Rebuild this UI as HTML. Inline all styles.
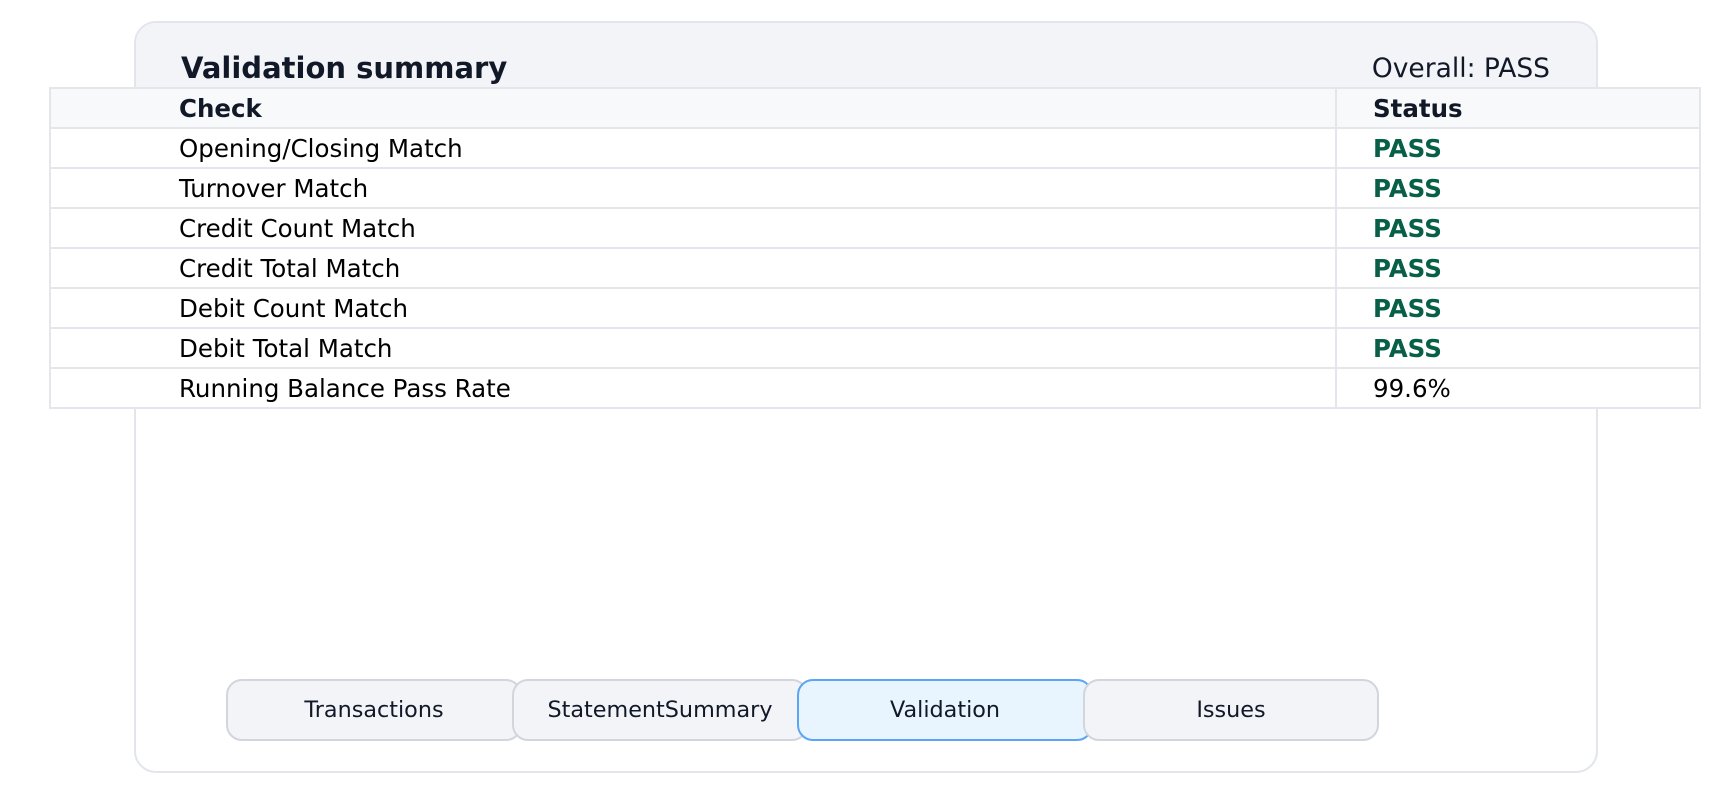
<!DOCTYPE html>
<html><head><style>
*{box-sizing:border-box;margin:0;padding:0}
body{width:1716px;height:795px;background:#fff;font-family:"DejaVu Sans","Liberation Sans",sans-serif;position:relative;overflow:hidden;color:#111827}
.card{position:absolute;left:134px;top:21px;width:1464px;height:752px;border:2px solid #e2e5ec;border-radius:22px;background:#fff;overflow:hidden}
.cardtop{position:absolute;left:0;top:0;right:0;height:70px;background:#f3f4f8}
.title{position:absolute;left:181px;top:51px;font-size:29px;font-weight:bold;color:#111827}
.overall{position:absolute;right:166px;top:53px;font-size:26.5px;color:#111827}
table{position:absolute;left:49px;top:87px;width:1652px;border-collapse:collapse;font-size:24.5px;background:#fff}
td{height:40px;border:2px solid #e4e6eb;padding:0;vertical-align:middle;background:#fff;color:#000}
td.c{padding-left:128px}
td.s{width:364px;padding-left:36px}
tr.h td{background:#f8f9fb;font-weight:bold;color:#111827}
td.p{color:#065f46;font-weight:bold}
.btn{position:absolute;top:679px;width:296px;height:62px;border:2px solid #d2d5dc;border-radius:16px;background:#f3f4f8;font-size:22.3px;text-align:center;line-height:59px;color:#111827}
.btn.a{background:#e8f4fe;border-color:#5aa5f5}
</style></head><body>
<div class="card"><div class="cardtop"></div></div>
<div class="title">Validation summary</div>
<div class="overall">Overall: PASS</div>
<table>
<tr class="h"><td class="c">Check</td><td class="s">Status</td></tr>
<tr><td class="c">Opening/Closing Match</td><td class="s p">PASS</td></tr>
<tr><td class="c">Turnover Match</td><td class="s p">PASS</td></tr>
<tr><td class="c">Credit Count Match</td><td class="s p">PASS</td></tr>
<tr><td class="c">Credit Total Match</td><td class="s p">PASS</td></tr>
<tr><td class="c">Debit Count Match</td><td class="s p">PASS</td></tr>
<tr><td class="c">Debit Total Match</td><td class="s p">PASS</td></tr>
<tr><td class="c">Running Balance Pass Rate</td><td class="s">99.6%</td></tr>
</table>
<div class="btn" style="left:226px">Transactions</div>
<div class="btn" style="left:512px">StatementSummary</div>
<div class="btn a" style="left:797px">Validation</div>
<div class="btn" style="left:1083px">Issues</div>
</body></html>
